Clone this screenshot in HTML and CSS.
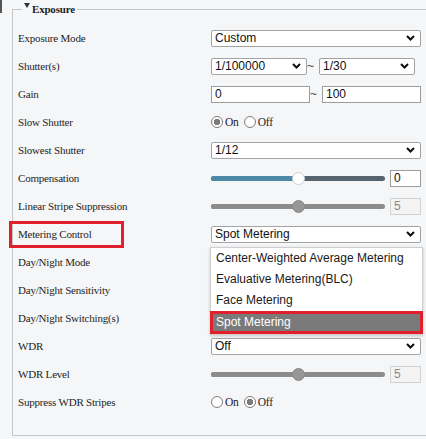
FILE: index.html
```html
<!DOCTYPE html>
<html lang="en">
<head>
  <meta charset="UTF-8" />
  <meta name="viewport" content="width=device-width, initial-scale=1.0"/>
  <title>Exposure</title>

  <link rel="stylesheet" href="styles.css">
</head>

<body>
  <div class="edge"></div>

  <fieldset class="panel">
    <legend><span class="caret"></span>Exposure</legend>

    <div class="row">
      <span class="lbl">Exposure Mode</span>
      <div class="sel wide"><span>Custom</span><svg class="chev" viewBox="0 0 9 6"><polyline points="1,1 4.5,4.5 8,1"/></svg></div>
    </div>

    <div class="row">
      <span class="lbl">Shutter(s)</span>
      <div class="pair">
        <div class="sel short"><span>1/100000</span><svg class="chev" viewBox="0 0 9 6"><polyline points="1,1 4.5,4.5 8,1"/></svg></div>
        <span class="tilde">~</span>
        <div class="sel short"><span>1/30</span><svg class="chev" viewBox="0 0 9 6"><polyline points="1,1 4.5,4.5 8,1"/></svg></div>
      </div>
    </div>

    <div class="row">
      <span class="lbl">Gain</span>
      <div class="pair">
        <input class="txt half" type="text" value="0">
        <span class="tilde">~</span>
        <input class="txt half" type="text" value="100">
      </div>
    </div>

    <div class="row">
      <span class="lbl">Slow Shutter</span>
      <div class="radios">
        <span class="radio on"></span><span class="rtext">On</span>
        <span class="radio"></span><span class="rtext">Off</span>
      </div>
    </div>

    <div class="row">
      <span class="lbl">Slowest Shutter</span>
      <div class="sel wide"><span>1/12</span><svg class="chev" viewBox="0 0 9 6"><polyline points="1,1 4.5,4.5 8,1"/></svg></div>
    </div>

    <div class="row">
      <span class="lbl">Compensation</span>
      <div class="slider">
        <div class="track"><div class="fill" style="width: 87px"></div><div class="thumb" style="left: 81px"></div></div>
        <input class="txt num" type="text" value="0">
      </div>
    </div>

    <div class="row">
      <span class="lbl">Linear Stripe Suppression</span>
      <div class="slider off">
        <div class="track"><div class="fill" style="width: 87px"></div><div class="thumb" style="left: 81px"></div></div>
        <input class="txt num" type="text" value="5" disabled>
      </div>
    </div>

    <div class="row">
      <span class="lbl"><span class="mark">Metering Control</span></span>
      <div class="ctl">
        <div class="sel wide"><span>Spot Metering</span><svg class="chev" viewBox="0 0 9 6"><polyline points="1,1 4.5,4.5 8,1"/></svg></div>
        <ul class="menu">
          <li>Center-Weighted Average Metering</li>
          <li>Evaluative Metering(BLC)</li>
          <li>Face Metering</li>
          <li class="picked">Spot Metering</li>
        </ul>
      </div>
    </div>

    <!-- these three controls sit under the open list -->
    <div class="row">
      <span class="lbl">Day/Night Mode</span>
    </div>

    <div class="row">
      <span class="lbl">Day/Night Sensitivity</span>
    </div>

    <div class="row">
      <span class="lbl">Day/Night Switching(s)</span>
    </div>

    <div class="row">
      <span class="lbl">WDR</span>
      <div class="sel wide"><span>Off</span><svg class="chev" viewBox="0 0 9 6"><polyline points="1,1 4.5,4.5 8,1"/></svg></div>
    </div>

    <div class="row">
      <span class="lbl">WDR Level</span>
      <div class="slider off">
        <div class="track"><div class="fill" style="width: 87px"></div><div class="thumb" style="left: 81px"></div></div>
        <input class="txt num" type="text" value="5" disabled>
      </div>
    </div>

    <div class="row">
      <span class="lbl">Suppress WDR Stripes</span>
      <div class="radios">
        <span class="radio"></span><span class="rtext">On</span>
        <span class="radio on"></span><span class="rtext">Off</span>
      </div>
    </div>
  </fieldset>
</body>
</html>
```

FILE: styles.css
```css
html, body {
  margin: 0;
  overflow: hidden;
}

body {
  background: #f5f6f8;
  color: #1e1e1e;
  font-family: "Liberation Serif", "Times New Roman", serif;
  font-size: 11px;
  letter-spacing: -0.2px;
  position: relative;
}

.edge {
  position: absolute;
  left: 0;
  top: 0;
  width: 2px;
  height: 13px;
  background: #555;
}

.panel {
  margin: 2px 0 0 12px;
  padding: 8px 0 19px 5px;
  border: 1px solid #c6c6c6;
  border-right: none;
  min-width: 0;
}

.panel legend {
  margin-left: 4px;
  padding: 0 2px;
  font-weight: bold;
  font-size: 11px;
  line-height: 14px;
}

.caret {
  display: inline-block;
  width: 0;
  height: 0;
  border-left: 3px solid transparent;
  border-right: 3px solid transparent;
  border-top: 5px solid #333;
  margin-right: 2px;
  vertical-align: 5px;
}

.row {
  display: grid;
  grid-template-columns: 193px 210px;
  align-items: center;
  height: 28px;
}

.lbl {
  white-space: nowrap;
}

.mark {
  display: inline-block;
  margin-left: -6px;
  padding: 0 0 0 6px;
  width: 103px;
  height: 21px;
  line-height: 21px;
  outline: 3px solid #e0202c;
}

.sel {
  display: flex;
  align-items: center;
  justify-content: space-between;
  box-sizing: border-box;
  height: 17px;
  padding: 0 5px 0 3px;
  border: 1px solid #a3a3a3;
  border-radius: 2px;
  background: #fff;
  color: #111;
  font-family: "Liberation Sans", Arial, sans-serif;
  font-size: 12px;
  letter-spacing: 0;
}

.sel.wide {
  width: 210px;
}

.sel.short {
  width: 96px;
}

.chev {
  width: 9px;
  height: 6px;
  fill: none;
  stroke: #111;
  stroke-width: 2;
}

.pair {
  display: flex;
  align-items: center;
  white-space: nowrap;
}

.tilde {
  width: 12px;
  font-family: "Liberation Sans", Arial, sans-serif;
  font-size: 12px;
  color: #444;
}

.txt {
  box-sizing: border-box;
  height: 17px;
  margin: 0;
  padding: 0 3px;
  border: 1px solid #9c9c9c;
  background: #fff;
  color: #111;
  font-family: "Liberation Sans", Arial, sans-serif;
  font-size: 12px;
}

.txt.half {
  width: 99px;
}

.txt.num {
  width: 31px;
  margin-left: 5px;
}

.txt:disabled {
  border-color: #d2d2d2;
  background: #f3f3f3;
  color: #888;
}

.radios {
  display: flex;
  align-items: center;
  font-size: 11.5px;
}

.radio {
  box-sizing: border-box;
  width: 12px;
  height: 12px;
  border: 1px solid #7d7d7d;
  border-radius: 50%;
  background: #fff;
}

.radio.on {
  background: radial-gradient(circle, #7b7b7b 0 3px, #fff 3.5px);
}

.rtext {
  margin: 0 5px 0 2px;
}

.slider {
  display: flex;
  align-items: center;
}

.track {
  position: relative;
  width: 175px;
  height: 5px;
  border-radius: 3px;
  background: #566470;
}

.fill {
  height: 100%;
  border-radius: 3px 0 0 3px;
  background: #4c8aa8;
}

.thumb {
  position: absolute;
  top: -4px;
  box-sizing: border-box;
  width: 13px;
  height: 13px;
  border: 1px solid #cfcfcf;
  border-radius: 50%;
  background: #fff;
}

.slider.off .track,
.slider.off .fill {
  background: #8c8c8c;
}

.slider.off .thumb {
  border-color: #8a8a8a;
  background: #979797;
}

.ctl {
  position: relative;
}

.menu {
  position: absolute;
  top: 21px;
  left: -1px;
  width: 213px;
  box-sizing: border-box;
  margin: 0;
  padding: 0;
  list-style: none;
  background: #fff;
  border: 1px solid #cfcfcf;
  box-shadow: 0 1px 3px rgba(0, 0, 0, 0.2);
  font-family: "Liberation Sans", Arial, sans-serif;
  font-size: 12px;
  letter-spacing: 0;
  color: #1a1a1a;
  z-index: 2;
}

.menu li {
  height: 21px;
  line-height: 21px;
  padding-left: 5px;
}

.menu li.picked {
  height: 17px;
  line-height: 17px;
  margin: 3px 2px 3px;
  padding-left: 3px;
  background: #7a7a7a;
  color: #fff;
  outline: 3px solid #e0202c;
}
```
